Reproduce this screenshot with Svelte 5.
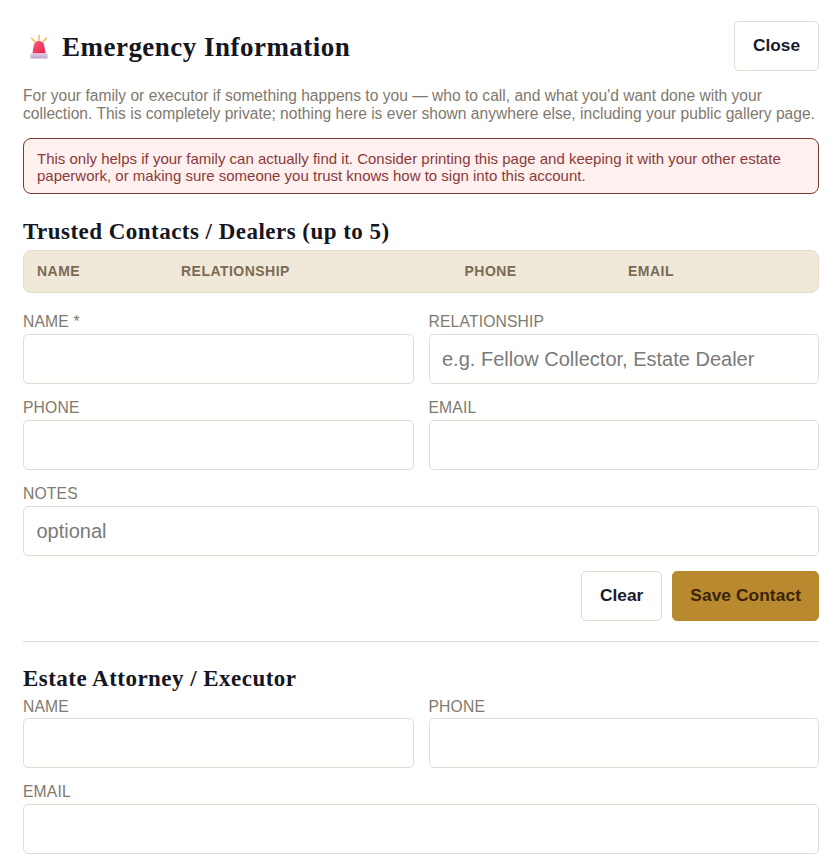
<script>
  const columns = ['Name', 'Relationship', 'Phone', 'Email'];
</script>

<main class="page">
  <header class="top">
    <h1 class="title">
      <svg class="siren" viewBox="0 0 18 24" width="18" height="24" aria-hidden="true">
        <defs>
          <linearGradient id="dome" x1="0" y1="0" x2="1" y2="1">
            <stop offset="0" stop-color="#fb5f7c" />
            <stop offset="1" stop-color="#e5234c" />
          </linearGradient>
          <linearGradient id="base" x1="0" y1="0" x2="0" y2="1">
            <stop offset="0" stop-color="#e6cfe6" />
            <stop offset="1" stop-color="#b9a0cc" />
          </linearGradient>
        </defs>
        <path d="M9 0.6v5M1.6 3.2l3 3.2M16.4 3.2l-3 3.2" stroke="#efc05a" stroke-width="1.6" stroke-linecap="round" fill="none" />
        <path d="M2.4 18.6 L3.9 10 C4.4 7.4 6.5 6 9 6 C11.5 6 13.6 7.4 14.1 10 L15.6 18.6Z" fill="url(#dome)" />
        <rect x="0.4" y="18.6" width="17.2" height="4.8" rx="0.7" fill="url(#base)" />
      </svg>
      <span>Emergency Information</span>
    </h1>
    <button class="btn" type="button">Close</button>
  </header>

  <p class="intro">For your family or executor if something happens to you — who to call, and what you'd want done with your collection. This is completely private; nothing here is ever shown anywhere else, including your public gallery page.</p>

  <div class="alert">This only helps if your family can actually find it. Consider printing this page and keeping it with your other estate paperwork, or making sure someone you trust knows how to sign into this account.</div>

  <h2 class="section first">Trusted Contacts / Dealers (up to 5)</h2>
  <div class="thead">
    {#each columns as c}<span>{c}</span>{/each}
  </div>

  <form class="form contact" on:submit|preventDefault>
    <label class="field"><span>Name *</span><input type="text" /></label>
    <label class="field"><span>Relationship</span><input type="text" placeholder="e.g. Fellow Collector, Estate Dealer" /></label>
    <label class="field"><span>Phone</span><input type="text" /></label>
    <label class="field"><span>Email</span><input type="text" /></label>
    <label class="field wide"><span>Notes</span><input type="text" placeholder="optional" /></label>
  </form>

  <div class="actions">
    <button class="btn" type="button">Clear</button>
    <button class="btn primary" type="button">Save Contact</button>
  </div>

  <hr />

  <h2 class="section second">Estate Attorney / Executor</h2>
  <form class="form attorney" on:submit|preventDefault>
    <label class="field"><span>Name</span><input type="text" /></label>
    <label class="field"><span>Phone</span><input type="text" /></label>
    <label class="field wide"><span>Email</span><input type="text" /></label>
  </form>
</main>

<style>
  :global(html), :global(body) {
    margin: 0;
    background: #fff;
    height: 858px;
    overflow: hidden;
  }
  .page {
    box-sizing: border-box;
    width: 836px;
    padding: 21px 17px 0 23px;
    font-family: "Liberation Sans", Arial, sans-serif;
    color: #1a1a2e;
  }
  .top {
    display: flex;
    justify-content: space-between;
    align-items: center;
  }
  .title {
    display: flex;
    align-items: center;
    gap: 14px;
    margin: 2px 0 0 7px;
    font-family: "Liberation Serif", Georgia, serif;
    font-weight: 700;
    font-size: 27px;
    line-height: 30px;
    letter-spacing: 0.48px;
    color: #16161f;
  }
  .btn {
    box-sizing: border-box;
    height: 50px;
    padding: 0 18px 2px;
    border: 1px solid #e0dccf;
    border-radius: 5px;
    background: #fff;
    color: #1a1a2e;
    font: 700 17.3px "Liberation Sans", Arial, sans-serif;
  }
  .intro {
    margin: 16px 0 0;
    font-size: 15.6px;
    line-height: 18px;
    color: #7f796e;
  }
  .alert {
    box-sizing: border-box;
    height: 56px;
    margin-top: 15px;
    padding: 11px 13px;
    border: 1px solid #7d3a32;
    border-radius: 8px;
    background: #fdf0ee;
    color: #8b3a3a;
    font-size: 15px;
    line-height: 17px;
  }
  .section {
    margin: 0;
    font-family: "Liberation Serif", Georgia, serif;
    font-weight: 700;
    font-size: 23px;
    line-height: 24px;
    letter-spacing: 0.47px;
    color: #16161f;
  }
  .first {
    margin-top: 26px;
  }
  .second {
    margin-top: 25px;
    margin-bottom: 7px;
  }
  .thead {
    box-sizing: border-box;
    display: grid;
    grid-template-columns: 144px 283.5px 163.5px 1fr;
    align-items: center;
    height: 43px;
    margin-top: 6px;
    padding: 0 13px 1px;
    border: 1px solid #e3dcc8;
    border-radius: 8px;
    background: #f0e8d8;
    color: #7a6b55;
    font-size: 14px;
    font-weight: 700;
    letter-spacing: 0.47px;
    text-transform: uppercase;
  }
  .form {
    display: grid;
    grid-template-columns: 1fr 1fr;
    gap: 15px;
  }
  .contact {
    margin-top: 20px;
  }
  .field {
    display: flex;
    flex-direction: column;
    gap: 3px;
    min-width: 0;
  }
  .attorney .field:not(.wide) {
    gap: 2px;
  }
  .field span {
    font-size: 15.7px;
    line-height: 18px;
    letter-spacing: 0.15px;
    color: #7f796e;
    text-transform: uppercase;
  }
  .wide {
    grid-column: 1 / -1;
  }
  input {
    box-sizing: border-box;
    width: 100%;
    height: 50px;
    padding: 0 12.5px;
    border: 1px solid #e0dccf;
    border-radius: 5px;
    background: #fff;
    font: 20px "Liberation Sans", Arial, sans-serif;
    color: #1a1a2e;
    outline: none;
  }
  input::placeholder {
    color: #7a7a7a;
  }
  .actions {
    display: flex;
    justify-content: flex-end;
    gap: 10px;
    margin-top: 15px;
  }
  .primary {
    padding: 0 17px 2px;
    border-color: #b8892e;
    background: #b8892e;
    color: #3a2408;
    letter-spacing: 0.1px;
  }
  hr {
    height: 1px;
    margin: 20px 0 0;
    border: 0;
    background: #e0dccf;
  }
</style>
